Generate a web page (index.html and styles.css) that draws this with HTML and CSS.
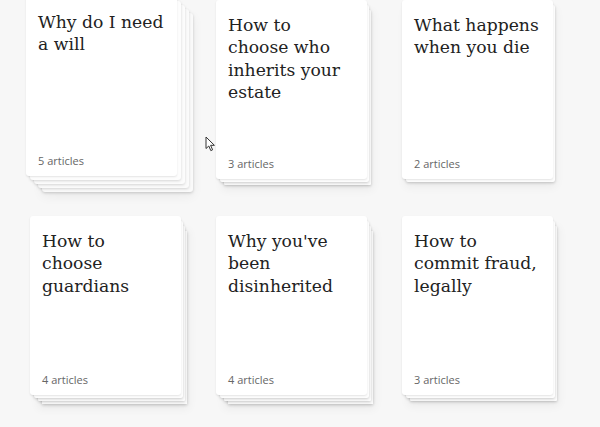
FILE: index.html
```html
<!DOCTYPE html>
<html lang="en">
<head>
  <meta charset="UTF-8">
  <title>Topics</title>
  <link rel="stylesheet" href="styles.css">
</head>
<body>
  <div class="topics">
    <a class="topic stack-4 lifted" href="#">
      <h3>Why do I need a will</h3>
      <span class="count">5 articles</span>
    </a>
    <a class="topic stack-2" href="#">
      <h3>How to choose who inherits your estate</h3>
      <span class="count">3 articles</span>
    </a>
    <a class="topic stack-1" href="#">
      <h3>What happens when you die</h3>
      <span class="count">2 articles</span>
    </a>
    <a class="topic stack-3" href="#">
      <h3>How to choose guardians</h3>
      <span class="count">4 articles</span>
    </a>
    <a class="topic stack-3" href="#">
      <h3>Why you've been disinherited</h3>
      <span class="count">4 articles</span>
    </a>
    <a class="topic stack-2" href="#">
      <h3>How to commit fraud, legally</h3>
      <span class="count">3 articles</span>
    </a>
  </div>

  <!-- mouse pointer -->
  <svg class="pointer" width="12" height="16" viewBox="0 0 12 16">
    <path d="M1 1 L1 12.5 L3.8 10 L5.8 14.6 L7.6 13.8 L5.6 9.3 L9.4 9.3 Z" fill="#fff" stroke="#333" stroke-width="1" stroke-linejoin="round"/>
  </svg>
</body>
</html>
```

FILE: styles.css
```css
body {
  margin: 0;
  background: #f7f7f7;
  font-family: 'Open Sans', sans-serif;
}
.topics {
  display: grid;
  grid-template-columns: repeat(3, 151px);
  grid-auto-rows: 179px;
  column-gap: 35px;
  row-gap: 37px;
  padding: 0 30px 20px;
}
.topic {
  display: flex;
  flex-direction: column;
  justify-content: space-between;
  padding: 14px 12px 8px 12px;
  background: #fff;
  border-radius: 3px;
  text-decoration: none;
  color: #222;
  transition: transform 0.2s, box-shadow 0.2s;
}
.topic h3 {
  margin: 0;
  font-family: 'DejaVu Serif', serif;
  font-weight: normal;
  font-size: 17.2px;
  line-height: 22.3px;
  color: #222;
}
.topic .count {
  font-size: 11px;
  color: #666;
}

/* paper sheets under the card, one per extra article;
   each sheet is pulled in a little so only its lower right edge shows */
.stack-1 {
  box-shadow: 0 1px 2px rgba(0,0,0,.1),
    3px 4px 0 -1px #fdfdfd, 3px 5px 3px -1px rgba(0,0,0,.2),
    3px 8px 10px rgba(0,0,0,.05);
}
.stack-2 {
  box-shadow: 0 1px 2px rgba(0,0,0,.1),
    3px 4px 0 -1px #fdfdfd, 3px 5px 3px -1px rgba(0,0,0,.2),
    6px 8px 0 -2px #fcfcfc, 6px 9px 3px -2px rgba(0,0,0,.22),
    6px 11px 10px rgba(0,0,0,.05);
}
.stack-3 {
  box-shadow: 0 1px 2px rgba(0,0,0,.1),
    3px 4px 0 -1px #fdfdfd, 3px 5px 3px -1px rgba(0,0,0,.2),
    6px 8px 0 -2px #fcfcfc, 6px 9px 3px -2px rgba(0,0,0,.2),
    9px 12px 0 -3px #fbfbfb, 9px 13px 3px -3px rgba(0,0,0,.22),
    8px 14px 10px rgba(0,0,0,.05);
}
.stack-4 {
  box-shadow: 0 1px 2px rgba(0,0,0,.1),
    3px 4px 0 -1px #fdfdfd, 3px 5px 3px -1px rgba(0,0,0,.2),
    6px 8px 0 -2px #fcfcfc, 6px 9px 3px -2px rgba(0,0,0,.2),
    9px 12px 0 -3px #fbfbfb, 9px 13px 3px -3px rgba(0,0,0,.2),
    12px 16px 0 -4px #fafafa, 12px 17px 3px -4px rgba(0,0,0,.22);
}
/* hovered card fans its sheets out */
.stack-4.lifted {
  transform: translate(-4px, -3px);
  box-shadow: 0 1px 2px rgba(0,0,0,.1),
    4px 4px 0 #fdfdfd, 4px 5px 3px rgba(0,0,0,.16),
    8px 8px 0 #fcfcfc, 8px 9px 3px rgba(0,0,0,.16),
    12px 12px 0 #fbfbfb, 12px 13px 3px rgba(0,0,0,.16),
    16px 16px 0 #fafafa, 16px 17px 3px rgba(0,0,0,.18),
    16px 20px 12px rgba(0,0,0,.06);
}
.pointer {
  position: absolute;
  left: 205px;
  top: 136px;
}
```
